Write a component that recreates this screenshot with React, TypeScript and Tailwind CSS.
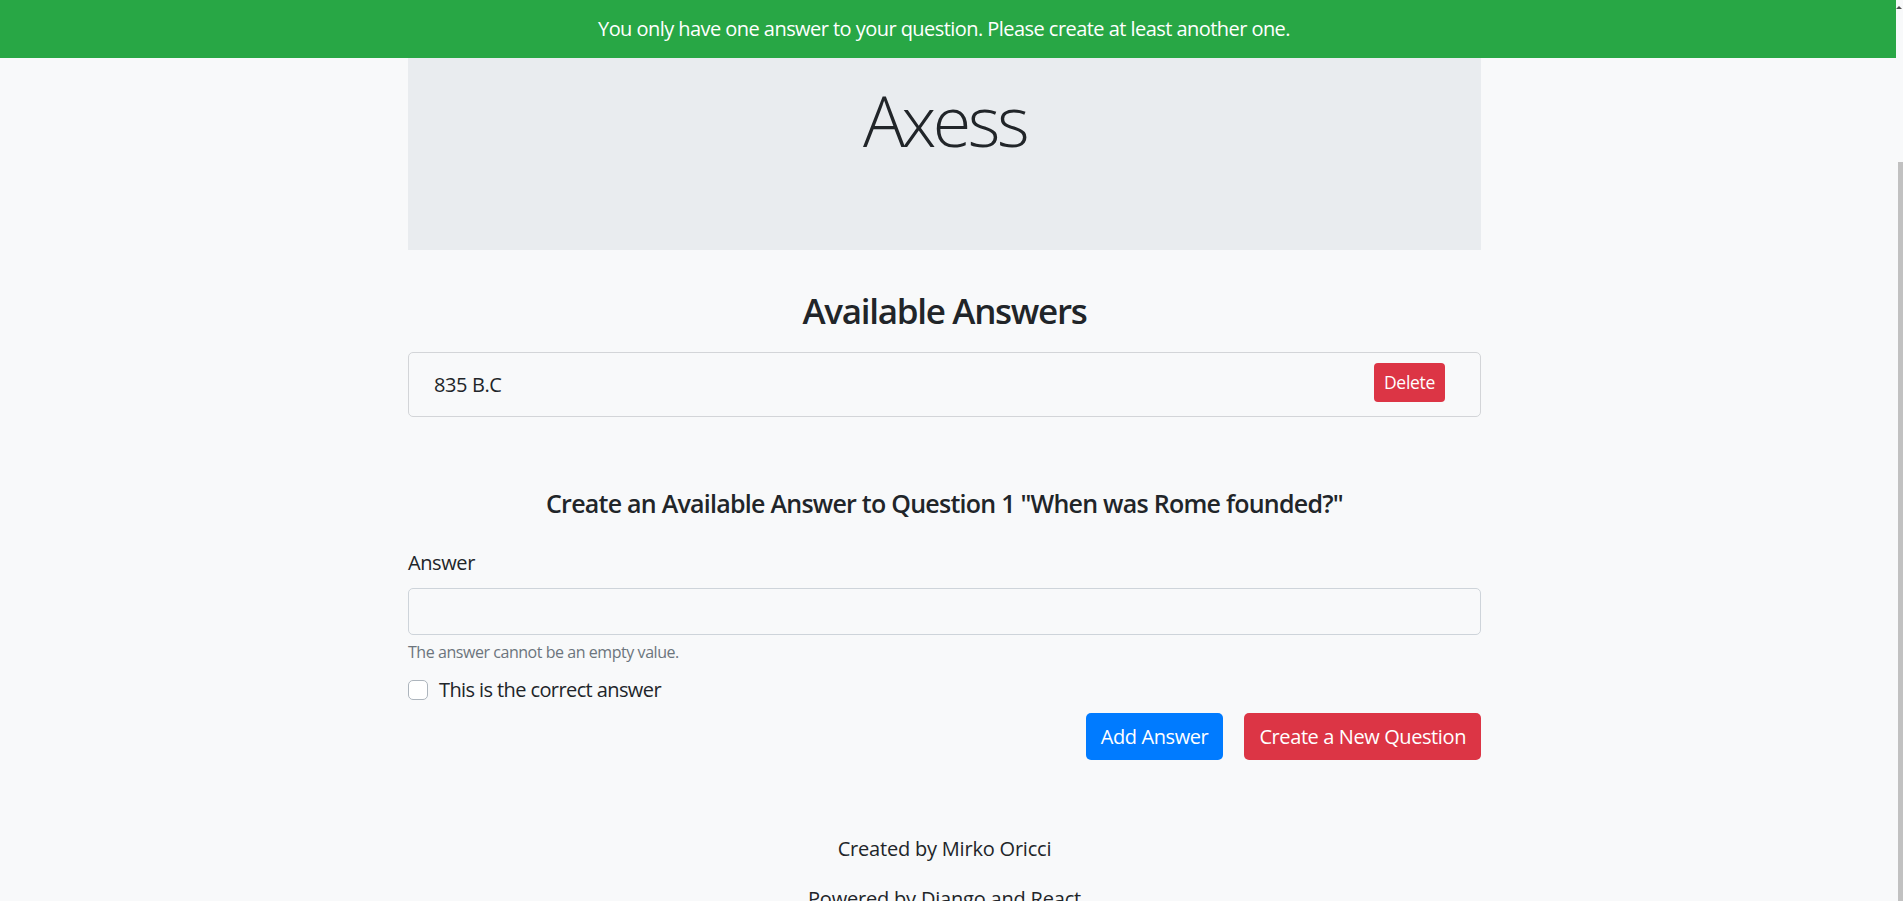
import React from "react";

const App: React.FC = () => {
    return (
        <div className="relative min-h-screen w-full overflow-hidden bg-[#f8f9fa] font-['Open_Sans',sans-serif] text-[#212529]">
            {/* Flash message */}
            <div className="flex h-[58px] w-[1896px] items-center justify-center bg-[#28a745] pr-[8px] text-[20px] tracking-[-0.55px] text-white">
                You only have one answer to your question. Please create at least another one.
            </div>

            <div className="w-[1889px]">
                <div className="mx-auto w-[1073px]">
                    {/* Jumbotron */}
                    <div className="h-[192px] bg-[#e9ecef] pt-[20px] text-center">
                        <h1 className="text-[70px] leading-[84px] font-light tracking-[-3.5px]">Axess</h1>
                    </div>

                    {/* Answers list */}
                    <h3 className="mt-[40px] text-center text-[35px] leading-[42px] font-semibold tracking-[-1.3px]">Available Answers</h3>
                    <ul className="mt-[20px]">
                        <li className="flex h-[65px] items-center justify-between rounded-[5px] border border-[#d3d5d8] pl-[25px] pr-[35px]">
                            <span className="text-[20px] leading-[30px] tracking-[-0.4px]">835 B.C</span>
                            <button type="button" className="-mt-[4px] h-[39px] rounded-[4px] bg-[#dc3545] px-[10px] text-[17.5px] tracking-[-0.3px] text-white">
                                Delete
                            </button>
                        </li>
                    </ul>

                    {/* Create form */}
                    <h5 className="mt-[71px] text-center text-[25px] leading-[30px] font-semibold tracking-[-0.75px]">
                        Create an Available Answer to Question 1 "When was Rome founded?"
                    </h5>

                    <form className="mt-[30px]" noValidate>
                        <label className="block text-[20px] leading-[30px] tracking-[-0.4px]">Answer</label>
                        <input type="text" className="mt-[10px] block h-[47px] w-full rounded-[5px] border border-[#ced4da] bg-transparent px-[15px] text-[20px] outline-none" />
                        <small className="mt-[5px] block text-[16px] leading-[24px] tracking-[-0.45px] text-[#6c757d]">The answer cannot be an empty value.</small>

                        <label className="mt-[11px] flex h-[30px] items-center gap-[11px] text-[20px] tracking-[-0.6px]">
                            <span className="block h-[20px] w-[20px] rounded-[5px] border border-[#adb5bd] bg-white" />
                            This is the correct answer
                        </label>

                        <div className="mt-[8px] flex justify-end gap-[21px]">
                            <button type="button" className="h-[47px] rounded-[5px] bg-[#007bff] px-[15px] text-[20px] tracking-[-0.4px] text-white">
                                Add Answer
                            </button>
                            <button type="button" className="h-[47px] rounded-[5px] bg-[#dc3545] px-[15px] text-[20px] tracking-[-0.4px] text-white">
                                Create a New Question
                            </button>
                        </div>
                    </form>

                    {/* Footer */}
                    <footer className="mt-[74px] text-center text-[20px] leading-[30px] tracking-[-0.2px]">
                        <p>Created by Mirko Oricci</p>
                        <p className="mt-[20px]">Powered by Django and React</p>
                    </footer>
                </div>
            </div>

            {/* Scrollbar */}
            <div className="absolute right-0 top-[162px] h-[800px] w-[5px] bg-[#c1c1c1]" />
            <div className="absolute right-[1px] top-[6px] h-0 w-0 border-x-[3px] border-b-[3px] border-x-transparent border-b-[#505050]" />
        </div>
    );
};

export default App;
